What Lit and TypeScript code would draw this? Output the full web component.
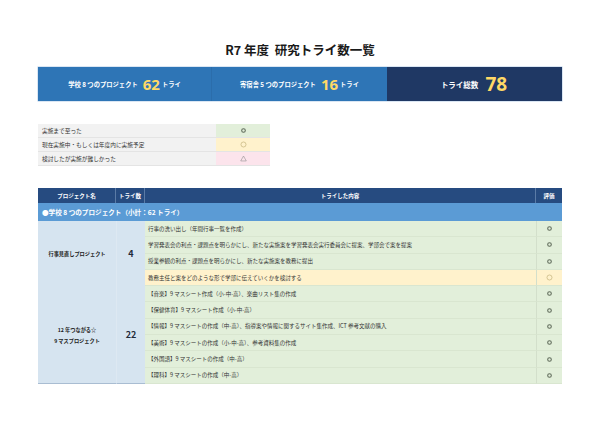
import { LitElement, css, html } from "lit";
import { customElement } from "lit/decorators.js";

const group1 = [
  { text: "行事の洗い出し（年間行事一覧を作成）", mark: "double" },
  { text: "学習発表会の利点・課題点を明らかにし、新たな実施案を学習発表会実行委員会に提案、学部会で案を提案", mark: "double" },
  { text: "授業参観の利点・課題点を明らかにし、新たな実施案を教務に提出", mark: "double" },
  { text: "教務主任と案をどのような形で学部に伝えていくかを検討する", mark: "circle" },
];

const group2 = [
  { text: "【音楽】9 マスシート作成（小-中-高）、楽曲リスト集の作成", mark: "double" },
  { text: "【保健体育】9 マスシート作成（小-中-高）", mark: "double" },
  { text: "【情報】9 マスシートの作成（中-高）、指導案や情報に関するサイト集作成、ICT 参考文献の購入", mark: "double" },
  { text: "【美術】9 マスシートの作成（小-中-高）、参考資料集の作成", mark: "double" },
  { text: "【外国語】9 マスシートの作成（中-高）", mark: "double" },
  { text: "【理科】9 マスシートの作成（中-高）", mark: "double" },
];

@customElement("app-root")
export class AppRoot extends LitElement {
  static styles = css`
    :host {
      display: block;
      width: 600px;
      height: 424px;
      background: #fff;
      font-family: "Noto Sans CJK JP", "Noto Sans", sans-serif;
      color: #333;
      overflow: hidden;
    }
    .page {
      padding: 41px 38px 0;
    }
    h1 {
      margin: 0;
      height: 26px;
      line-height: 18px;
      text-align: center;
      font-size: 12.5px;
      font-weight: 700;
      color: #1a1a1a;
    }
    .banner {
      display: grid;
      grid-template-columns: 174px 175px 175px;
      height: 34px;
      color: #fff;
      box-shadow: 0 0 0 0.5px #b4cde6;
    }
    .banner > div {
      display: flex;
      align-items: center;
      justify-content: center;
      background: #2e75b6;
      font-size: 6.3px;
      font-weight: 700;
    }
    .banner > div:first-child {
      border-right: 1px solid #2b6dab;
    }
    .banner > .total {
      background: #1f3864;
      font-size: 7.5px;
      padding-right: 1px;
    }
    .num {
      font-family: "Open Sans", "Noto Sans", sans-serif;
      font-size: 15px;
      font-weight: 700;
      line-height: 1;
      color: #ffd966;
      margin: 0 2px 0 5px;
    }
    .total .num {
      font-size: 19px;
      margin: 0 0 0 7px;
    }
    .legend {
      margin-top: 23px;
      width: 232px;
      display: grid;
      grid-template-columns: 178px 54px;
      grid-auto-rows: 14px;
      font-size: 5.7px;
    }
    .legend > div {
      display: flex;
      align-items: center;
      border-bottom: 1px solid #e4e4e4;
      box-sizing: border-box;
    }
    .label {
      background: #f2f2f2;
      padding-left: 4px;
    }
    .legend .cell {
      justify-content: center;
    }
    .green {
      background: #e2efda;
    }
    .yellow {
      background: #fff2cc;
    }
    .pink {
      background: #fce4ec;
    }
    .table {
      margin-top: 22px;
      display: grid;
      grid-template-columns: 78px 29px 391px 26px;
      grid-template-rows: 15px 18px repeat(10, 16.3px);
      font-size: 5.5px;
    }
    .head {
      display: flex;
      align-items: center;
      justify-content: center;
      background: #264b80;
      color: #fff;
      font-weight: 700;
      border-right: 1px solid #5b7ba6;
      box-sizing: border-box;
    }
    .head:nth-child(4) {
      border-right: 0;
    }
    .section {
      grid-column: 1 / -1;
      display: flex;
      align-items: center;
      padding-left: 4px;
      background: #5b9bd5;
      color: #fff;
      font-size: 6.6px;
      font-weight: 700;
    }
    .project {
      display: flex;
      align-items: center;
      justify-content: center;
      text-align: center;
      background: #d6e4f0;
      font-size: 5.2px;
      font-weight: 700;
      line-height: 11px;
      color: #1a1a1a;
    }
    .count {
      display: flex;
      align-items: center;
      justify-content: center;
      background: #d6e4f0;
      border-left: 1px solid #dde8f2;
      box-sizing: border-box;
      font-size: 9px;
      font-weight: 700;
      color: #1f2a3a;
    }
    .span4 {
      grid-row: span 4;
    }
    .span6 {
      grid-row: span 6;
    }
    .last {
      border-bottom: 1px solid #a9bdd2;
    }
    .content,
    .rate {
      display: flex;
      align-items: center;
      box-sizing: border-box;
      border-bottom: 1px solid #d9e6d0;
    }
    .content {
      padding-left: 3px;
    }
    .rate {
      justify-content: center;
      border-left: 1px solid #d3dfcb;
    }
    svg {
      width: 7px;
      height: 7px;
      display: block;
    }
  `;

  mark(kind: string) {
    if (kind === "triangle") {
      return html`<svg viewBox="0 0 10 10"><path d="M5 1.5 9 8.5H1Z" fill="none" stroke="#8a8a8a" stroke-width=".8" /></svg>`;
    }
    if (kind === "circle") {
      return html`<svg viewBox="0 0 10 10"><circle cx="5" cy="5" r="3.6" fill="none" stroke="#b5a56a" stroke-width=".8" /></svg>`;
    }
    return html`<svg viewBox="0 0 10 10"><circle cx="5" cy="5" r="2.6" fill="none" stroke="#5f6b5a" stroke-width="1.5" /></svg>`;
  }

  rows(items: { text: string; mark: string }[]) {
    return items.map((row) => {
      const tone = row.mark === "circle" ? "yellow" : "green";
      return html`
        <div class="content ${tone}">${row.text}</div>
        <div class="rate ${tone}">${this.mark(row.mark)}</div>
      `;
    });
  }

  render() {
    return html`
      <div class="page">
        <h1>R7 年度&nbsp;&nbsp;研究トライ数一覧</h1>
        <div class="banner">
          <div><span>学校 8 つのプロジェクト</span><span class="num">62</span><span>トライ</span></div>
          <div><span>寄宿舎 5 つのプロジェクト</span><span class="num">16</span><span>トライ</span></div>
          <div class="total"><span>トライ総数</span><span class="num">78</span></div>
        </div>
        <div class="legend">
          <div class="label">実施まで至った</div>
          <div class="cell green">${this.mark("double")}</div>
          <div class="label">現在実施中・もしくは年度内に実施予定</div>
          <div class="cell yellow">${this.mark("circle")}</div>
          <div class="label">検討したが実施が難しかった</div>
          <div class="cell pink">${this.mark("triangle")}</div>
        </div>
        <div class="table">
          <div class="head">プロジェクト名</div>
          <div class="head">トライ数</div>
          <div class="head">トライした内容</div>
          <div class="head">評価</div>
          <div class="section">●学校 8 つのプロジェクト（小計：62 トライ）</div>
          <div class="project span4">行事見直しプロジェクト</div>
          <div class="count span4">4</div>
          ${this.rows(group1)}
          <div class="project last span6">12 年つながる☆<br />9 マスプロジェクト</div>
          <div class="count last span6">22</div>
          ${this.rows(group2)}
        </div>
      </div>
    `;
  }
}
